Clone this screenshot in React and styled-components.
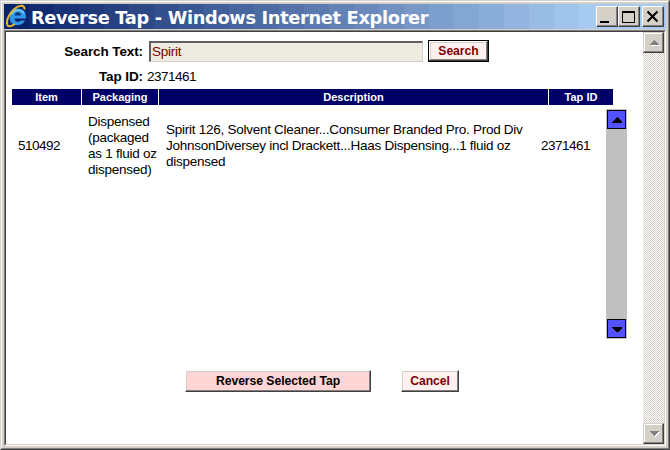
import React from "react";
import styled, { createGlobalStyle } from "styled-components";

const Global = createGlobalStyle`
  * { box-sizing: border-box; }
  body { margin: 0; background: #fff; overflow: hidden; }
`;

/* Banded caption gradient, as drawn by a 25px-step palette blend. */
const BANDS = 24;
const bandColor = (i) => {
  const t = i / (BANDS - 1);
  const mix = (a, b) => Math.round(a + (b - a) * t);
  return `rgb(${mix(10, 166)}, ${mix(36, 202)}, ${mix(106, 240)})`;
};
const captionBands = Array.from({ length: BANDS }, (_, i) =>
  `${bandColor(i)} ${i * 25}px ${i === BANDS - 1 ? 670 : (i + 1) * 25}px`
).join(", ");

const Frame = styled.div`
  width: 670px;
  height: 450px;
  background: #d4d0c8;
  border: 1px solid;
  border-color: #d4d0c8 #404040 #404040 #d4d0c8;
  font-family: "Liberation Sans", Arial, sans-serif;
  font-size: 13.5px;
  color: #000;
`;

const FrameInner = styled.div`
  height: 448px;
  border: 1px solid;
  border-color: #fff #808080 #808080 #fff;
  padding: 2px;
  display: flex;
  flex-direction: column;
`;

const TitleBar = styled.header`
  height: 25px;
  flex: none;
  display: flex;
  align-items: center;
  padding: 0 2px 0 1px;
  background: linear-gradient(90deg, ${captionBands});
  margin-bottom: 1px;
`;

const Title = styled.h1`
  flex: 1;
  height: 25px;
  margin: 0 0 0 3px;
  padding-top: 1px;
  font: bold 17.8px/25px "DejaVu Sans", Verdana, sans-serif;
  letter-spacing: -0.33px;
  color: #fff;
  white-space: nowrap;
`;

const Caption = styled.button`
  width: 22px;
  height: 21px;
  padding: 0;
  margin-left: ${(p) => (p.$apart ? 2 : 0)}px;
  background: #d4d0c8;
  border: 1px solid;
  border-color: #fff #404040 #404040 #fff;
  box-shadow: inset -1px -1px #808080;
  svg { display: block; }
`;

const Client = styled.div`
  flex: 1;
  border: 1px solid;
  border-color: #808080 #fff #fff #808080;
  display: flex;
`;

const ClientInner = styled.div`
  flex: 1;
  border: 1px solid;
  border-color: #404040 #d4d0c8 #d4d0c8 #404040;
  display: flex;
  background: #fff;
`;

const Page = styled.main`
  width: 637px;
  display: flex;
  flex-direction: column;
`;

const Line = styled.div`
  display: flex;
  align-items: center;
  height: ${(p) => p.$height}px;
  margin-top: ${(p) => p.$top}px;
`;

const Label = styled.label`
  width: 137px;
  text-align: right;
  font-weight: bold;
  letter-spacing: -0.1px;
`;

const Value = styled.span`
  margin-left: 4px;
  letter-spacing: -0.5px;
`;

const SearchField = styled.input`
  width: 274px;
  height: 21px;
  margin: 0 5px 0 6px;
  padding: 0 0 0 1px;
  border: 2px solid;
  border-color: #606060 #d4d0c8 #d4d0c8 #606060;
  border-right-width: 1px;
  border-bottom-width: 1px;
  background: #eeebe0;
  color: #800000;
  font: 13.5px "Liberation Sans", Arial, sans-serif;
  letter-spacing: -0.25px;
  outline: 0;
`;

const Button = styled.button`
  width: ${(p) => p.$width}px;
  height: 22px;
  padding: 0 0 1px;
  background: ${(p) => (p.$strong ? "#ffd5d5" : "#fff0f0")};
  color: ${(p) => (p.$strong ? "#000" : "#800000")};
  font: bold 12.2px "Liberation Sans", Arial, sans-serif;
  letter-spacing: -0.05px;
  white-space: nowrap;
  border: 1px solid;
  border-color: ${(p) => (p.$default ? "#000" : "#fff #404040 #404040 #fff")};
  box-shadow: ${(p) =>
    p.$default
      ? "inset -1px -1px #404040, inset 1px 1px #fff, inset -2px -2px #808080, inset 2px 2px #d4d0c8"
      : "inset -1px -1px #808080, inset 1px 1px #d4d0c8"};
`;

const Headings = styled.div`
  display: grid;
  grid-template-columns: 69px 76px 389px 64px;
  gap: 1px;
  width: 601px;
  margin: 5px 0 0 6px;
`;

const Heading = styled.div`
  height: 16px;
  background: #000066;
  color: #fff;
  text-align: center;
  font-size: 11px;
  font-weight: bold;
  line-height: 17px;
`;

const Results = styled.div`
  display: flex;
  height: 230px;
  margin-top: 4px;
`;

const Row = styled.div`
  display: grid;
  grid-template-columns: 70px 78px 375px 65px;
  align-items: center;
  width: 600px;
  height: 73px;
  padding-left: 12px;
  line-height: 16px;
`;

const Cell = styled.div`
  white-space: nowrap;
  letter-spacing: ${(p) => (p.$numeric ? -0.5 : -0.26)}px;
`;

const Scroller = styled.div`
  width: 21px;
  height: 230px;
  padding: 1px;
  background: #c0c0c0;
  display: flex;
  flex-direction: column;
  justify-content: space-between;
`;

const ScrollStep = styled.button`
  width: 19px;
  height: 19px;
  padding: 0;
  border: 1px solid #000;
  background: #5252ff;
  svg { display: block; }
`;

const Actions = styled.div`
  display: flex;
  gap: 30px;
  margin: 31px 0 0 179px;
`;

const PageScroll = styled.aside`
  width: 21px;
  display: flex;
  flex-direction: column;
  justify-content: space-between;
  background: repeating-conic-gradient(#d4d0c8 0 25%, #fff 0 50%) 0 0 / 2px 2px;
`;

const PageStep = styled.button`
  width: 21px;
  height: 21px;
  padding: 0;
  background: #d4d0c8;
  border: 1px solid;
  border-color: #d4d0c8 #404040 #404040 #d4d0c8;
  box-shadow: inset -1px -1px #808080, inset 1px 1px #fff;
  svg { display: block; }
`;

const BrowserIcon = () => (
  <svg width="23" height="25" viewBox="0 0 23 25">
    <path d="M20 16.6C18.6 19.8 16 21.2 12.5 21.2C7.6 21.2 4.6 18 4.6 13.2C4.6 8.2 7.8 4.6 12.8 4.6C18.4 4.6 21.4 8.4 21 14.6H9.6C9.8 16.8 10.9 17.9 12.8 17.9C14.2 17.9 15 17.5 15.6 16.6Z" fill="#2f97ea" />
    <path d="M9.6 11.6H16C15.7 9.4 14.7 8.3 12.8 8.3C11 8.3 9.9 9.5 9.6 11.6Z" fill="#123579" />
    <path d="M7 10.5C8 7.6 10 6.2 13 6.2C16 6.2 18 7.4 19 9.5" fill="none" stroke="#79cfff" strokeWidth="1.4" />
    <path d="M19.6 5.5C20 0.4 14 0.9 9 5.2C4 9.6 0.9 16.6 2.2 20.6C3.2 23.4 7 22.2 10 20" fill="none" stroke="#e8b230" strokeWidth="2" />
  </svg>
);

const Arrow = ({ down }) => (
  <svg width="17" height="17" viewBox="0 0 17 17" shapeRendering="crispEdges">
    <path d={down ? "M4 7H14V8L10 12H9L4 8Z" : "M4 11V12H14V11L10 6H9Z"} fill="#000" />
  </svg>
);

const PageArrow = ({ down }) => (
  <svg width="19" height="19" viewBox="0 0 19 19" shapeRendering="crispEdges">
    <path d={down ? "M6 8H16L11 13Z" : "M6 13H16L11 8Z"} fill="#fff" />
    <path d={down ? "M5 7H15L10 12Z" : "M5 12H15L10 7Z"} fill="#808080" />
  </svg>
);

export default function App() {
  return (
    <Frame>
      <Global />
      <FrameInner>
        <TitleBar>
          <BrowserIcon />
          <Title>Reverse Tap - Windows Internet Explorer</Title>
          <Caption aria-label="Minimize">
            <svg width="20" height="19"><path d="M3 14H12V16H3Z" fill="#000" /></svg>
          </Caption>
          <Caption aria-label="Maximize">
            <svg width="20" height="19" shapeRendering="crispEdges"><path fillRule="evenodd" d="M3 4H16V16H3ZM4 6V15H15V6Z" fill="#000" /></svg>
          </Caption>
          <Caption $apart aria-label="Close">
            <svg width="20" height="19"><path d="M4.5 4.5L14.5 14.5M14.5 4.5L4.5 14.5" stroke="#000" strokeWidth="2.1" /></svg>
          </Caption>
        </TitleBar>
        <Client>
          <ClientInner>
            <Page>
              <Line $height={22} $top={8}>
                <Label htmlFor="search">Search Text:</Label>
                <SearchField id="search" defaultValue="Spirit" />
                <Button $width={61} $default>Search</Button>
              </Line>
              <Line $height={16} $top={6}>
                <Label>Tap ID:</Label>
                <Value>2371461</Value>
              </Line>
              <Headings>
                <Heading>Item</Heading>
                <Heading>Packaging</Heading>
                <Heading>Description</Heading>
                <Heading>Tap ID</Heading>
              </Headings>
              <Results>
                <Row>
                  <Cell $numeric>510492</Cell>
                  <Cell>Dispensed<br />(packaged<br />as 1 fluid oz<br />dispensed)</Cell>
                  <Cell>
                    Spirit 126, Solvent Cleaner...Consumer Branded Pro. Prod Div<br />
                    JohnsonDiversey incl Drackett...Haas Dispensing...1 fluid oz<br />
                    dispensed
                  </Cell>
                  <Cell $numeric>2371461</Cell>
                </Row>
                <Scroller>
                  <ScrollStep aria-label="Previous"><Arrow /></ScrollStep>
                  <ScrollStep aria-label="Next"><Arrow down /></ScrollStep>
                </Scroller>
              </Results>
              <Actions>
                <Button $width={186} $strong>Reverse Selected Tap</Button>
                <Button $width={58}>Cancel</Button>
              </Actions>
            </Page>
            <PageScroll>
              <PageStep aria-label="Scroll up"><PageArrow /></PageStep>
              <PageStep aria-label="Scroll down"><PageArrow down /></PageStep>
            </PageScroll>
          </ClientInner>
        </Client>
      </FrameInner>
    </Frame>
  );
}
